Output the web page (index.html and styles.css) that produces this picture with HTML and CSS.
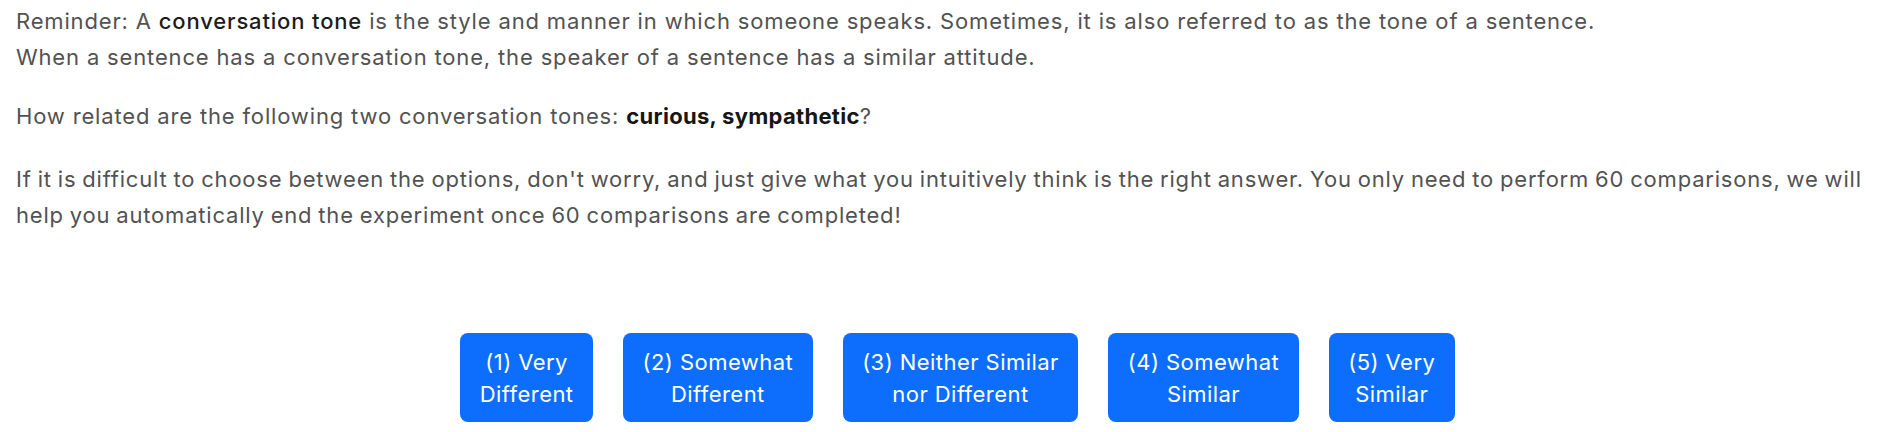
FILE: index.html
```html
<!DOCTYPE html>
<html lang="en">
<head>
<meta charset="utf-8">
<title>Conversation tone comparison</title>
<link rel="stylesheet" href="styles.css">
</head>
<body>
<main class="page">
  <section class="instructions">
    <p class="para para-first">Reminder: A <span class="term">conversation tone</span> is the style and manner in which someone speaks. Sometimes, it is also referred to as the tone of a sentence.<br>When a sentence has a conversation tone, the speaker of a sentence has a similar attitude.</p>
    <p class="para para-question">How related are the following two conversation tones: <strong class="pair">curious, sympathetic</strong>?</p>
    <p class="para para-note">If it is difficult to choose between the options, don't worry, and just give what you intuitively think is the right answer. You only need to perform 60 comparisons, we will help you automatically end the experiment once 60 comparisons are completed!</p>
  </section>
  <div class="choices">
    <button class="choice" type="button">(1) Very<br>Different</button>
    <button class="choice" type="button">(2) Somewhat<br>Different</button>
    <button class="choice" type="button">(3) Neither Similar<br>nor Different</button>
    <button class="choice" type="button">(4) Somewhat<br>Similar</button>
    <button class="choice" type="button">(5) Very<br>Similar</button>
  </div>
</main>
</body>
</html>
```
FILE: styles.css
```css
html, body {
  margin: 0;
  padding: 0;
  background: #ffffff;
}

body {
  font-family: Inter, "Noto Sans", "Liberation Sans", sans-serif;
}

.page {
  padding: 4px 4px 0 16px;
}

.instructions {
  color: #525252;
  font-size: 22px;
  line-height: 35.5px;
  letter-spacing: 0.84px;
}

.para {
  margin: 0;
}

.para-question {
  margin-top: 23.5px;
}

.para-note {
  margin-top: 28px;
  letter-spacing: 0.8px;
  word-spacing: -1px;
}

.term {
  color: #1c1c1c;
  font-weight: 500;
}

.pair {
  color: #161616;
  font-weight: 700;
  letter-spacing: 0.3px;
}

.choices {
  display: flex;
  justify-content: center;
  gap: 30px;
  margin-top: 100px;
  padding-left: 12px;
}

.choice {
  font-family: Inter, "Noto Sans", "Liberation Sans", sans-serif;
  font-size: 22px;
  font-weight: 400;
  line-height: 32px;
  letter-spacing: 0.45px;
  color: #ffffff;
  background: #0d6efd;
  border: 0;
  border-radius: 8px;
  padding: 12.5px 19.5px;
  text-align: center;
  cursor: pointer;
}
```
